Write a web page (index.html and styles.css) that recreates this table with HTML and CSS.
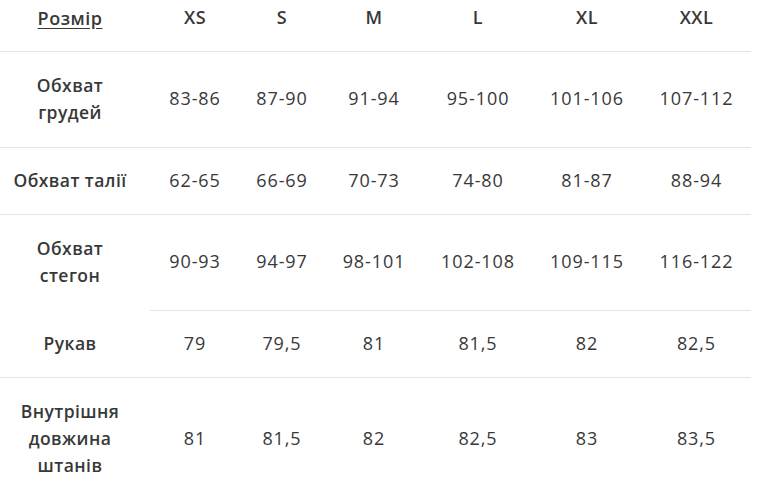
FILE: index.html
```html
<!DOCTYPE html>
<html lang="uk">
<head>
<meta charset="utf-8">
<title>Розмір</title>
<link rel="stylesheet" href="styles.css">
</head>
<body>
<div class="size-table">
  <div class="row head">
    <div class="cell label"><span class="u">Розмір</span></div>
    <div class="cell">XS</div>
    <div class="cell">S</div>
    <div class="cell">M</div>
    <div class="cell">L</div>
    <div class="cell">XL</div>
    <div class="cell">XXL</div>
  </div>
  <div class="row tall">
    <div class="cell label">Обхват<br>грудей</div>
    <div class="cell">83-86</div>
    <div class="cell">87-90</div>
    <div class="cell">91-94</div>
    <div class="cell">95-100</div>
    <div class="cell">101-106</div>
    <div class="cell">107-112</div>
  </div>
  <div class="row short">
    <div class="cell label">Обхват талії</div>
    <div class="cell">62-65</div>
    <div class="cell">66-69</div>
    <div class="cell">70-73</div>
    <div class="cell">74-80</div>
    <div class="cell">81-87</div>
    <div class="cell">88-94</div>
  </div>
  <div class="row tall no-first-line">
    <div class="cell label">Обхват<br>стегон</div>
    <div class="cell">90-93</div>
    <div class="cell">94-97</div>
    <div class="cell">98-101</div>
    <div class="cell">102-108</div>
    <div class="cell">109-115</div>
    <div class="cell">116-122</div>
  </div>
  <div class="row short">
    <div class="cell label">Рукав</div>
    <div class="cell">79</div>
    <div class="cell">79,5</div>
    <div class="cell">81</div>
    <div class="cell">81,5</div>
    <div class="cell">82</div>
    <div class="cell">82,5</div>
  </div>
  <div class="row last">
    <div class="cell label">Внутрішня<br>довжина<br>штанів</div>
    <div class="cell">81</div>
    <div class="cell">81,5</div>
    <div class="cell">82</div>
    <div class="cell">82,5</div>
    <div class="cell">83</div>
    <div class="cell">83,5</div>
  </div>
</div>
</body>
</html>
```

FILE: styles.css
```css
html, body {
  margin: 0;
  padding: 0;
  background: #ffffff;
}

body {
  font-family: "Open Sans", "Noto Sans", sans-serif;
  color: #383838;
}

.size-table {
  width: 751px;
  display: flex;
  flex-direction: column;
}

.row {
  display: grid;
  grid-template-columns: 150px 90px 84px 100px 108px 110px 109px;
}

.cell {
  display: flex;
  align-items: center;
  justify-content: center;
  text-align: center;
  box-sizing: border-box;
  padding-bottom: 3px;
  font-size: 18px;
  letter-spacing: 0.9px;
  border-bottom: 1px solid #e3e3e3;
}

.cell.label {
  padding-right: 10px;
  padding-bottom: 1px;
  font-weight: 600;
  font-size: 17.5px;
  letter-spacing: 0.45px;
  line-height: 27px;
}

.head .cell {
  height: 52px;
  align-items: flex-start;
  padding-top: 5px;
  padding-bottom: 0;
  font-weight: 600;
  font-size: 18px;
  letter-spacing: 0.5px;
}

.u {
  text-decoration: underline;
  text-underline-offset: 3px;
}

.tall .cell {
  height: 96px;
}

.short .cell {
  height: 67px;
}

.no-first-line .cell.label {
  border-bottom-color: transparent;
}

.last .cell {
  border-bottom: none;
  height: 122px;
}
```
